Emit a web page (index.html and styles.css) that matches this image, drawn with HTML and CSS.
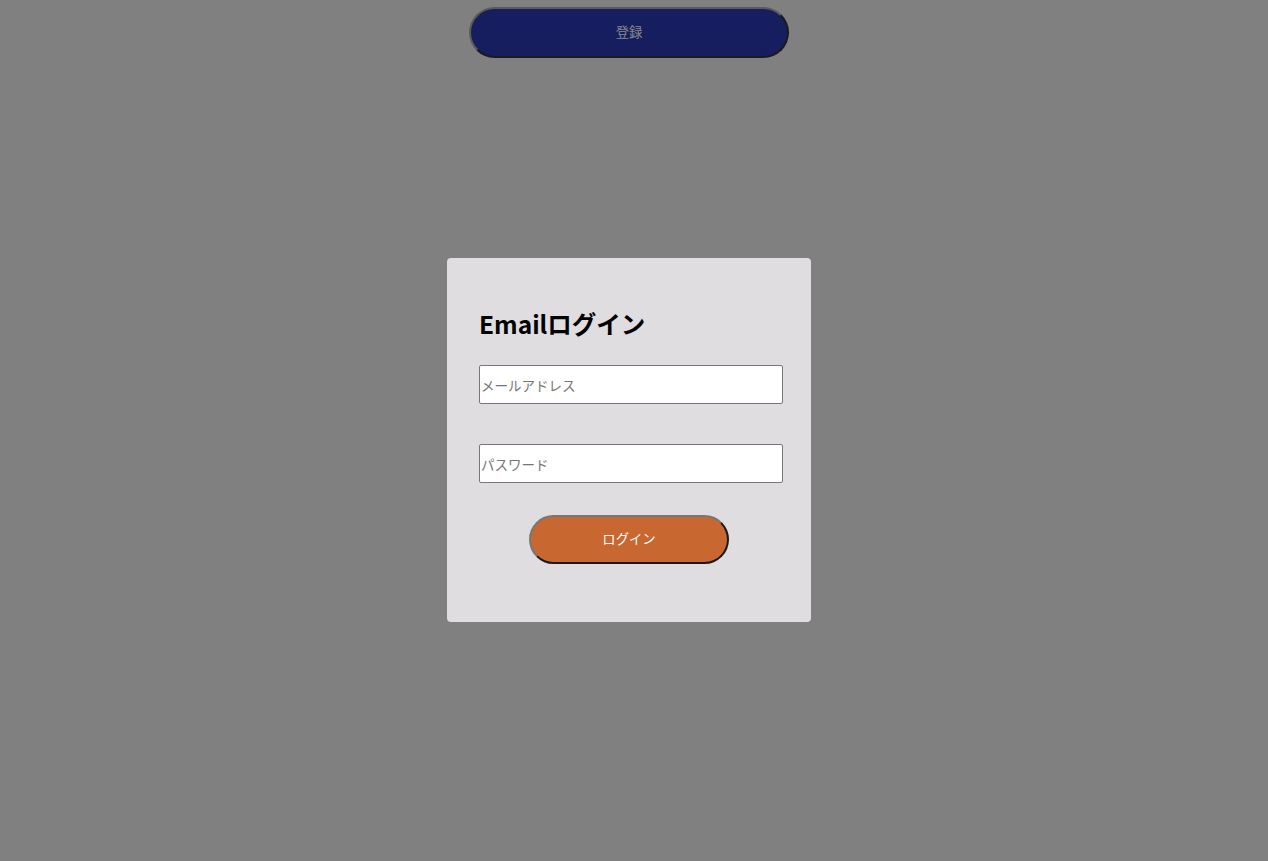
FILE: index.html
```html
<!DOCTYPE html>
<html lang="ja">
<head>
<meta charset="utf-8">
<title>Emailログイン</title>
<link rel="stylesheet" href="styles.css">
</head>
<body>
<div class="top">
  <button class="register-btn" type="button">登録</button>
</div>
<div class="card">
  <h2 class="title">Emailログイン</h2>
  <form class="form">
    <input class="field" type="email" placeholder="メールアドレス">
    <input class="field" type="password" placeholder="パスワード">
    <div class="actions">
      <button class="login-btn" type="button">ログイン</button>
    </div>
  </form>
</div>
</body>
</html>
```

FILE: styles.css
```css
html, body {
  margin: 0;
  padding: 0;
}
body {
  background: #808080;
  min-height: 100vh;
  box-sizing: border-box;
  padding-right: 10px;
  font-family: "Noto Sans CJK JP", "Noto Sans", sans-serif;
  display: flex;
  flex-direction: column;
  align-items: center;
}
.top {
  padding-top: 7px;
  display: flex;
  justify-content: center;
}
.register-btn {
  width: 320px;
  height: 51px;
  padding: 0 0 3px;
  border-radius: 26px;
  border: 2px solid;
  border-color: #5a5a5a #1a1a1a #1a1a1a #5a5a5a;
  background: #161e60;
  color: #8a8a8a;
  font-family: "Noto Sans CJK JP", sans-serif;
  font-size: 13.333px;
  cursor: pointer;
}
.card {
  margin-top: 200px;
  width: 364px;
  box-sizing: border-box;
  background: #dfdddf;
  border-radius: 4px;
  padding: 32px 32px 58px;
}
.title {
  margin: 16px 0 24px;
  font-size: 24.5px;
  font-weight: 700;
  line-height: 35px;
  color: #000;
}
.form {
  display: flex;
  flex-direction: column;
  gap: 40px;
}
.field {
  width: 304px;
  height: 39px;
  box-sizing: border-box;
  border: 1px solid #767676;
  border-radius: 2px;
  padding: 1px 2px 1px 1px;
  background: #fff;
  font-family: "Noto Sans CJK JP", sans-serif;
  font-size: 13.5px;
}
.field::placeholder {
  color: #757575;
}
.actions {
  display: flex;
  justify-content: center;
  margin-top: -8px;
}
.login-btn {
  width: 200px;
  height: 49px;
  padding: 0 0 2px;
  border-radius: 25px;
  border: 2px solid;
  border-color: #777 #1a1a1a #1a1a1a #777;
  background: #c8672f;
  color: #fff;
  font-family: "Noto Sans CJK JP", sans-serif;
  font-size: 13.333px;
  cursor: pointer;
}
```
